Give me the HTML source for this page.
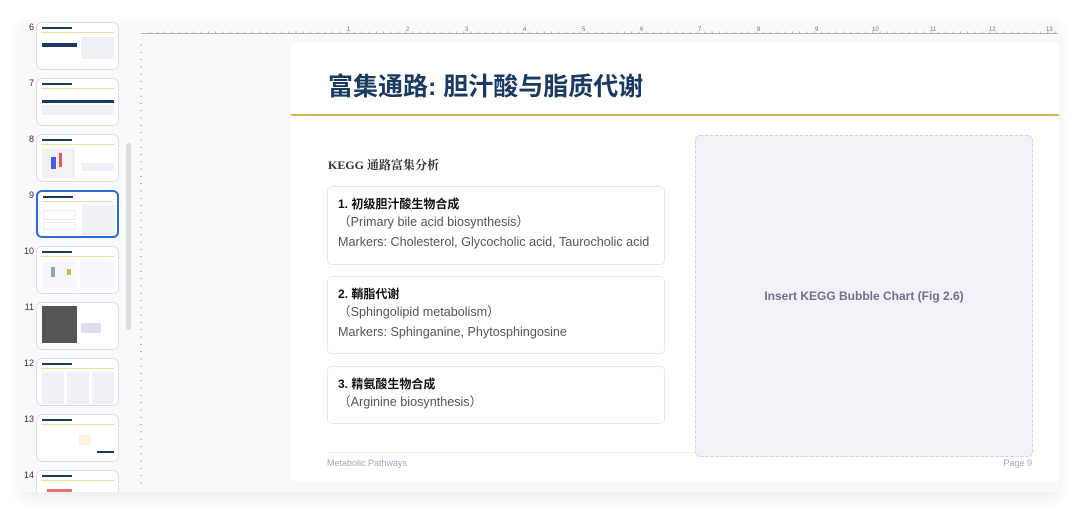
<!DOCTYPE html>
<html><head><meta charset="utf-8"><style>
*{margin:0;padding:0;box-sizing:border-box}
body{width:1080px;height:513px;background:#fff;position:relative;overflow:hidden;font-family:"Liberation Sans","Noto Sans CJK SC",sans-serif}
.win{position:absolute;left:20px;top:20px;width:1039px;height:472px;background:#f8f9fb;box-shadow:0 6px 14px rgba(0,0,0,.08);overflow:hidden}
.num{position:absolute;font-size:9px;color:#333;width:14px;text-align:right}
.th{position:absolute;left:36px;width:83px;height:48px;background:#fff;border:1px solid #dcdfe5;border-radius:6px;overflow:hidden}
.th .t{position:absolute;left:5px;top:4px;width:30px;height:2px;background:#1b3a63}
.th .g{position:absolute;left:4px;right:4px;top:9px;height:1px;background:#f0dca0}
.th .b{position:absolute;background:#eef1f6}
.sel{border:2px solid #2e6bd6}
.card{position:absolute;left:327px;width:338px;background:#fff;border:1px solid #e5e8ee;border-radius:5px;padding:9px 10px}
.card h4{font-size:12px;font-weight:bold;color:#111;line-height:16px}
.card p{font-size:12.6px;color:#555;line-height:20px}
</style></head><body>
<div class="win"></div>
<div class="num" style="left:20px;top:22px">6</div>
<div class="num" style="left:20px;top:78px">7</div>
<div class="num" style="left:20px;top:134px">8</div>
<div class="num" style="left:20px;top:190px">9</div>
<div class="num" style="left:20px;top:246px">10</div>
<div class="num" style="left:20px;top:302px">11</div>
<div class="num" style="left:20px;top:358px">12</div>
<div class="num" style="left:20px;top:414px">13</div>
<div class="num" style="left:20px;top:470px">14</div>
<div class="th" style="top:22px"><div class="t"></div><div class="g"></div><div class="b" style="left:5px;top:20px;width:35px;height:4px;background:#1b3a63"></div><div class="b" style="left:44px;top:14px;width:33px;height:22px"></div></div>
<div class="th" style="top:78px"><div class="t"></div><div class="g"></div><div class="b" style="left:5px;top:21px;width:72px;height:3px;background:#1b3a63"></div><div class="b" style="left:5px;top:26px;width:72px;height:10px"></div></div>
<div class="th" style="top:134px"><div class="t"></div><div class="g"></div><div class="b" style="left:5px;top:13px;width:33px;height:30px;background:#f2f2f5"></div><div class="b" style="left:14px;top:22px;width:5px;height:12px;background:#4a5de0"></div><div class="b" style="left:22px;top:18px;width:3px;height:14px;background:#e65a5a"></div><div class="b" style="left:44px;top:28px;width:33px;height:8px"></div></div>
<div class="th sel" style="top:190px"><div class="t"></div><div class="g"></div><div class="b" style="left:5px;top:18px;width:33px;height:10px;background:#fff;border:1px solid #eee"></div><div class="b" style="left:5px;top:30px;width:33px;height:8px;background:#fff;border:1px solid #eee"></div><div class="b" style="left:44px;top:13px;width:33px;height:30px"></div></div>
<div class="th" style="top:246px"><div class="t"></div><div class="g"></div><div class="b" style="left:5px;top:13px;width:35px;height:30px;background:#f6f8fb"></div><div class="b" style="left:14px;top:20px;width:4px;height:10px;background:#8fa3c4"></div><div class="b" style="left:30px;top:22px;width:4px;height:6px;background:#e0b830"></div><div class="b" style="left:43px;top:13px;width:35px;height:30px;background:#f6f8fb"></div></div>
<div class="th" style="top:302px"><div class="b" style="left:5px;top:3px;width:35px;height:37px;background:#555"></div><div class="b" style="left:44px;top:20px;width:20px;height:10px;background:#dde"></div></div>
<div class="th" style="top:358px"><div class="t"></div><div class="g"></div><div class="b" style="left:5px;top:13px;width:22px;height:32px"></div><div class="b" style="left:30px;top:13px;width:22px;height:32px"></div><div class="b" style="left:55px;top:13px;width:22px;height:32px"></div></div>
<div class="th" style="top:414px"><div class="t"></div><div class="g"></div><div class="b" style="left:42px;top:20px;width:12px;height:10px;background:#fbf3dc"></div><div class="b" style="left:60px;top:36px;width:17px;height:2px;background:#1b3a63"></div></div>
<div class="th" style="top:470px;height:22px;border-bottom:none;border-radius:6px 6px 0 0"><div class="t"></div><div class="g"></div><div class="b" style="left:10px;top:18px;width:25px;height:3px;background:#e57373"></div></div>
<div style="position:absolute;left:126px;top:143px;width:5px;height:187px;background:#ddd;border-radius:3px"></div>
<svg style="position:absolute;left:0;top:0" width="1080" height="513">
<line x1="141" y1="33.5" x2="1058" y2="33.5" stroke="#999" stroke-width="0.8"/>
<g stroke="#999" stroke-width="0.7" id="tk"></g>
<g font-size="6" fill="#777" font-family="Liberation Sans">
<text x="347" y="31">1</text><text x="406" y="31">2</text><text x="465" y="31">3</text><text x="523" y="31">4</text><text x="582" y="31">5</text><text x="640" y="31">6</text><text x="698" y="31">7</text><text x="757" y="31">8</text><text x="815" y="31">9</text><text x="872" y="31">10</text><text x="930" y="31">11</text><text x="989" y="31">12</text><text x="1046" y="31">13</text>
</g>
</svg>
<script>
var g=document.getElementById('tk'),s='';
for(var x=150;x<1058;x+=7.3){s+='<line x1="'+x+'" y1="33" x2="'+x+'" y2="31.5"/>';}
for(var y=45;y<490;y+=7.3){s+='<line x1="140" y1="'+y+'" x2="142" y2="'+y+'"/>';}
g.innerHTML=s;
</script>
<div style="position:absolute;left:291px;top:43px;width:768px;height:438px;background:#fff">
<div style="position:absolute;left:37px;top:24px;font-size:25px;font-weight:bold;color:#1b3a63">富集通路: 胆汁酸与脂质代谢</div>
<div style="position:absolute;left:0;top:71px;width:768px;height:2px;background:#d9b650"></div>
<div style="position:absolute;left:37px;top:113px;font-size:12px;font-weight:bold;color:#333;font-family:'Liberation Serif','Noto Serif CJK SC',serif">KEGG 通路富集分析</div>
<div style="position:absolute;left:36px;top:409px;width:368px;height:1px;background:#eef0f3"></div>
<div style="position:absolute;left:36px;top:415px;font-size:9px;color:#a0a9b8">Metabolic Pathways</div>
<div style="position:absolute;right:27px;top:415px;font-size:9px;color:#a0a9b8">Page 9</div>
<div style="position:absolute;left:404px;top:92px;width:338px;height:322px;background:#eff2f7;border:1.5px dashed #cdd4df;border-radius:5px;display:flex;align-items:center;justify-content:center;font-size:12px;font-weight:bold;color:#6b7585">Insert KEGG Bubble Chart (Fig 2.6)</div>
</div>
<div class="card" style="top:186px;height:79px"><h4>1. 初级胆汁酸生物合成</h4><p>（Primary bile acid biosynthesis）</p><p>Markers: Cholesterol, Glycocholic acid, Taurocholic acid</p></div>
<div class="card" style="top:276px;height:78px"><h4>2. 鞘脂代谢</h4><p>（Sphingolipid metabolism）</p><p>Markers: Sphinganine, Phytosphingosine</p></div>
<div class="card" style="top:366px;height:58px"><h4>3. 精氨酸生物合成</h4><p>（Arginine biosynthesis）</p></div>
</body></html>
